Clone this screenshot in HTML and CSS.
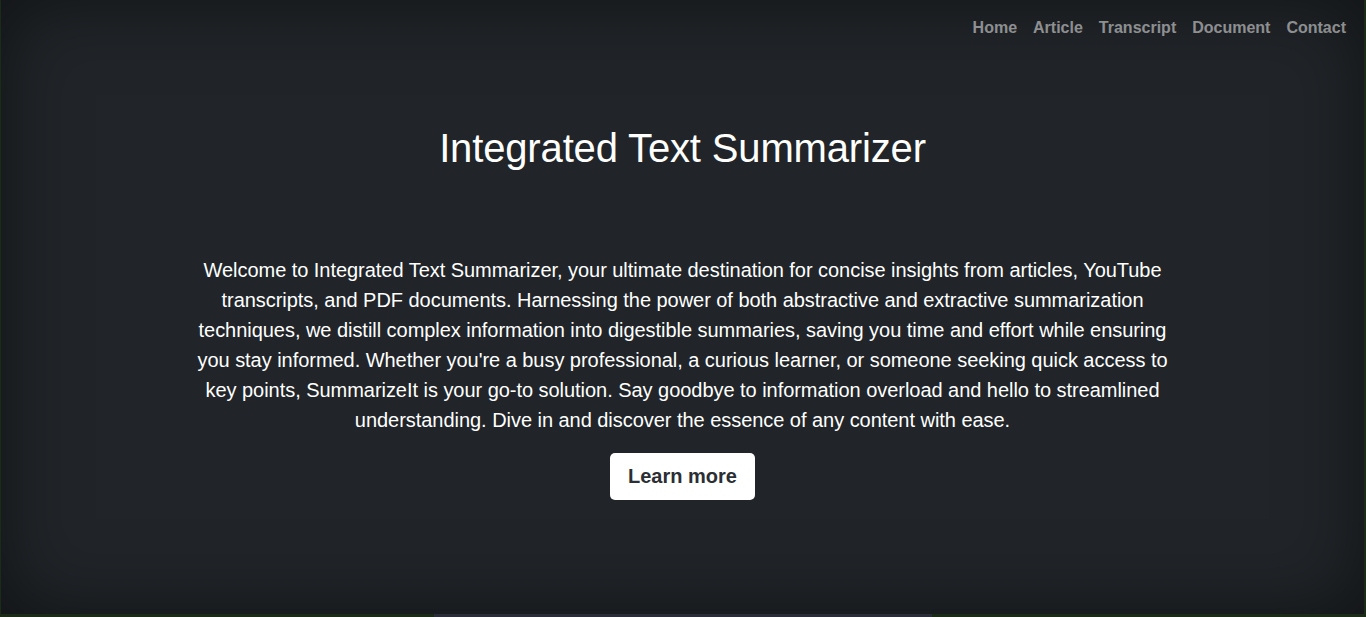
FILE: index.html
```html
<!DOCTYPE html>
<html lang="en">
<head>
<meta charset="utf-8">
<title>Integrated Text Summarizer</title>
<link rel="stylesheet" href="styles.css">
</head>
<body>
<div class="cover">
  <header class="masthead">
    <nav class="nav">
      <a class="nav-link" href="#">Home</a>
      <a class="nav-link" href="#">Article</a>
      <a class="nav-link" href="#">Transcript</a>
      <a class="nav-link" href="#">Document</a>
      <a class="nav-link" href="#">Contact</a>
    </nav>
  </header>
  <main class="hero">
    <h1 class="title">Integrated Text Summarizer</h1>
    <p class="lead">Welcome to Integrated Text Summarizer, your ultimate destination for concise insights from articles, YouTube transcripts, and PDF documents. Harnessing the power of both abstractive and extractive summarization techniques, we distill complex information into digestible summaries, saving you time and effort while ensuring you stay informed. Whether you're a busy professional, a curious learner, or someone seeking quick access to key points, SummarizeIt is your go-to solution. Say goodbye to information overload and hello to streamlined understanding. Dive in and discover the essence of any content with ease.</p>
    <a class="btn" href="#">Learn more</a>
  </main>
</div>
<div class="footer-edge"></div>
</body>
</html>
```

FILE: styles.css
```css
html, body {
  margin: 0;
  padding: 0;
}
body {
  background: #1c2a18;
  font-family: "Liberation Sans", Arial, sans-serif;
  color: #fff;
  overflow: hidden;
}
.cover {
  margin: 0 2px 0 1px;
  height: 614px;
  background: #212529;
  box-shadow: inset 0 0 5rem rgba(0, 0, 0, 0.5);
  display: flex;
  flex-direction: column;
}
.masthead {
  padding: 13px 18px 0 20px;
}
.nav {
  display: flex;
  justify-content: flex-end;
  gap: 16px;
}
.nav-link {
  font-size: 16px;
  font-weight: 700;
  line-height: 24px;
  padding: 3px 0 4px;
  color: rgba(255, 255, 255, 0.5);
  text-decoration: none;
}
.hero {
  display: flex;
  flex-direction: column;
  align-items: center;
  text-align: center;
}
.title {
  margin: 80px 0 0 0;
  font-size: 40px;
  font-weight: 400;
  line-height: 48px;
  letter-spacing: -0.15px;
}
.lead {
  margin: 83px 0 0 0;
  max-width: 980px;
  font-size: 20px;
  line-height: 30px;
  font-weight: 300;
  letter-spacing: -0.04px;
}
.btn {
  margin-top: 18px;
  display: inline-block;
  background: #fff;
  color: #2b2e33;
  font-size: 20px;
  font-weight: 700;
  line-height: 30px;
  padding: 8px 18px 9px;
  border-radius: 5px;
  text-decoration: none;
}
.footer-edge {
  width: 498px;
  height: 3px;
  margin: 0 auto;
  background: #2a2d38;
}
```
